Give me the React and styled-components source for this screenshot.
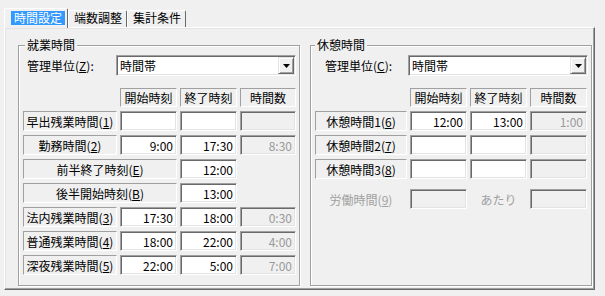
import React from 'react'
import styled, { createGlobalStyle } from 'styled-components'

const GlobalStyle = createGlobalStyle`
  html, body {
    margin: 0;
    padding: 0;
    background: #f0f0f0;
  }
  body {
    font-family: "Noto Sans CJK JP", "Noto Sans", sans-serif;
    font-size: 12px;
    color: #000;
  }
`

const Window = styled.div`
  box-sizing: border-box;
  width: 605px;
  height: 296px;
  padding: 8px 0 0 4px;
`

const TabBar = styled.div`
  display: flex;
  align-items: flex-end;
  height: 19px;
  position: relative;
  z-index: 1;
`

const Tab = styled.div`
  box-sizing: border-box;
  display: flex;
  align-items: flex-start;
  height: ${p => (p.$active ? '20px' : '17px')};
  margin-bottom: ${p => (p.$active ? '-1px' : '0')};
  padding: ${p => (p.$active ? '2px 2px 0 6px' : '0 4px 0 5px')};
  border: 1px solid #fff;
  border-bottom: none;
  border-right-color: #696969;
  border-radius: 2px 2px 0 0;
  background: #f0f0f0;
  line-height: 14px;
  white-space: nowrap;
`

const TabText = styled.span`
  padding: ${p => (p.$active ? '0 3px' : '0')};
  background: ${p => (p.$active ? '#3399ff' : 'transparent')};
  color: ${p => (p.$active ? '#fff' : '#000')};
`

const Page = styled.div`
  box-sizing: border-box;
  width: 591px;
  height: 263px;
  border: 1px solid;
  border-color: #fff #696969 #696969 #fff;
  box-shadow: inset -1px -1px 0 #a0a0a0, inset 1px 1px 0 #e3e3e3;
  padding: 17px 0 0 13px;
  display: flex;
  align-items: flex-start;
  gap: 10px;
`

const Group = styled.section`
  position: relative;
  box-sizing: border-box;
  width: 282px;
  height: 241px;
  border: 1px solid #a0a0a0;
  box-shadow: inset 1px 1px 0 #fff, 1px 1px 0 #fff;
  padding-top: 9px;
`

const GroupTitle = styled.span`
  position: absolute;
  top: -8px;
  left: ${p => p.$x}px;
  padding: 0 2px;
  line-height: 14px;
  background: #f0f0f0;
`

const ManageRow = styled.div`
  display: flex;
  align-items: center;
  height: 21px;
`

const ManageLabel = styled.span`
  box-sizing: border-box;
  flex: 0 0 97px;
  padding-left: ${p => p.$indent}px;
  white-space: nowrap;
`

const SelectBox = styled.div`
  box-sizing: border-box;
  display: flex;
  align-items: center;
  width: 180px;
  height: 21px;
  border: 1px solid;
  border-color: #a0a0a0 #fff #fff #a0a0a0;
  box-shadow: inset 1px 1px 0 #696969, inset -1px -1px 0 #e3e3e3;
  background: #fff;
  padding: 1px 1px 1px 3px;
`

const SelectValue = styled.span`
  flex: 1;
  line-height: 17px;
`

const DropButton = styled.span`
  box-sizing: border-box;
  display: flex;
  align-items: center;
  justify-content: center;
  width: 16px;
  height: 17px;
  border: 1px solid;
  border-color: #e3e3e3 #696969 #696969 #e3e3e3;
  box-shadow: inset 1px 1px 0 #fff, inset -1px -1px 0 #a0a0a0;
  background: #f0f0f0;
`

const TimeGrid = styled.div`
  display: grid;
  grid-template-columns: ${p => p.$cols};
  grid-template-rows: ${p => p.$rows};
  grid-auto-rows: 20px;
  column-gap: 3px;
  row-gap: 4px;
  margin-top: 12px;
  padding-left: 4px;
`

const sunken = `
  box-sizing: border-box;
  border: 1px solid;
  border-color: #a0a0a0 #fff #fff #a0a0a0;
`

const HeaderCell = styled.div`
  ${sunken}
  grid-column: ${p => p.$col};
  display: flex;
  align-items: center;
  justify-content: center;
  white-space: nowrap;
`

const RowLabel = styled.div`
  ${sunken}
  grid-column: 1 / span ${p => p.$span};
  display: flex;
  align-items: center;
  justify-content: center;
  white-space: nowrap;
  background: #f0f0f0;
`

const Field = styled.input`
  box-sizing: border-box;
  grid-column: ${p => p.$col};
  width: 100%;
  height: 20px;
  margin: 0;
  padding: 0 3px 0 0;
  border: 1px solid;
  border-color: #a0a0a0 #fff #fff #a0a0a0;
  box-shadow: inset 1px 1px 0 #696969, inset -1px -1px 0 #e3e3e3;
  background: ${p => (p.disabled ? '#f0f0f0' : '#fff')};
  color: ${p => (p.disabled ? '#999' : '#000')};
  font: inherit;
  line-height: 18px;
  text-align: right;
  outline: none;
  &:disabled {
    color: #999;
    -webkit-text-fill-color: #999;
  }
`

const DimText = styled.span`
  grid-column: ${p => p.$col};
  display: flex;
  align-items: center;
  justify-content: center;
  color: #a0a0a0;
  white-space: nowrap;
`

const Spacer = styled.div`
  grid-column: 1 / -1;
`

const Accel = ({ text, k }) => (
  <>
    {text}(<u>{k}</u>)
  </>
)

const Combo = ({ value }) => (
  <SelectBox>
    <SelectValue>{value}</SelectValue>
    <DropButton>
      <svg width="7" height="4" viewBox="0 0 7 4">
        <polygon points="0,0 7,0 3.5,4" fill="#000" />
      </svg>
    </DropButton>
  </SelectBox>
)

const workRows = [
  { label: '早出残業時間', k: '1', start: '', end: '', total: '' },
  { label: '勤務時間', k: '2', start: '9:00', end: '17:30', total: '8:30' },
  { label: '前半終了時刻', k: 'E', wide: true, end: '12:00' },
  { label: '後半開始時刻', k: 'B', wide: true, end: '13:00' },
  { label: '法内残業時間', k: '3', start: '17:30', end: '18:00', total: '0:30' },
  { label: '普通残業時間', k: '4', start: '18:00', end: '22:00', total: '4:00' },
  { label: '深夜残業時間', k: '5', start: '22:00', end: '5:00', total: '7:00' },
]

const breakRows = [
  { label: '休憩時間1', k: '6', start: '12:00', end: '13:00', total: '1:00' },
  { label: '休憩時間2', k: '7', start: '', end: '', total: '' },
  { label: '休憩時間3', k: '8', start: '', end: '', total: '' },
]

const Headers = () => (
  <>
    <HeaderCell $col={2}>開始時刻</HeaderCell>
    <HeaderCell $col={3}>終了時刻</HeaderCell>
    <HeaderCell $col={4}>時間数</HeaderCell>
  </>
)

const TimeRow = ({ row }) =>
  row.wide ? (
    <>
      <RowLabel $span={2}>
        <Accel text={row.label} k={row.k} />
      </RowLabel>
      <Field $col={3} readOnly value={row.end} />
    </>
  ) : (
    <>
      <RowLabel $span={1}>
        <Accel text={row.label} k={row.k} />
      </RowLabel>
      <Field $col={2} readOnly value={row.start} />
      <Field $col={3} readOnly value={row.end} />
      <Field $col={4} disabled value={row.total} />
    </>
  )

const tabs = ['時間設定', '端数調整', '集計条件']

export default function App() {
  return (
    <Window>
      <GlobalStyle />
      <TabBar>
        {tabs.map((t, i) => (
          <Tab key={t} $active={i === 0}>
            <TabText $active={i === 0}>{t}</TabText>
          </Tab>
        ))}
      </TabBar>
      <Page>
        <Group>
          <GroupTitle $x={6}>就業時間</GroupTitle>
          <ManageRow>
            <ManageLabel $indent={8}>
              <Accel text="管理単位" k="Z" />:
            </ManageLabel>
            <Combo value="時間帯" />
          </ManageRow>
          <TimeGrid $cols="94px 57px 57px 56px" $rows="19px">
            <Headers />
            {workRows.map(r => (
              <TimeRow key={r.k} row={r} />
            ))}
          </TimeGrid>
        </Group>
        <Group>
          <GroupTitle $x={4}>休憩時間</GroupTitle>
          <ManageRow>
            <ManageLabel $indent={14}>
              <Accel text="管理単位" k="C" />:
            </ManageLabel>
            <Combo value="時間帯" />
          </ManageRow>
          <TimeGrid $cols="92px 57px 57px 57px" $rows="19px 20px 20px 20px 2px">
            <Headers />
            {breakRows.map(r => (
              <TimeRow key={r.k} row={r} />
            ))}
            <Spacer />
            <DimText $col={1}>
              <Accel text="労働時間" k="9" />
            </DimText>
            <Field $col={2} disabled value="" />
            <DimText $col={3}>あたり</DimText>
            <Field $col={4} disabled value="" />
          </TimeGrid>
        </Group>
      </Page>
    </Window>
  )
}
